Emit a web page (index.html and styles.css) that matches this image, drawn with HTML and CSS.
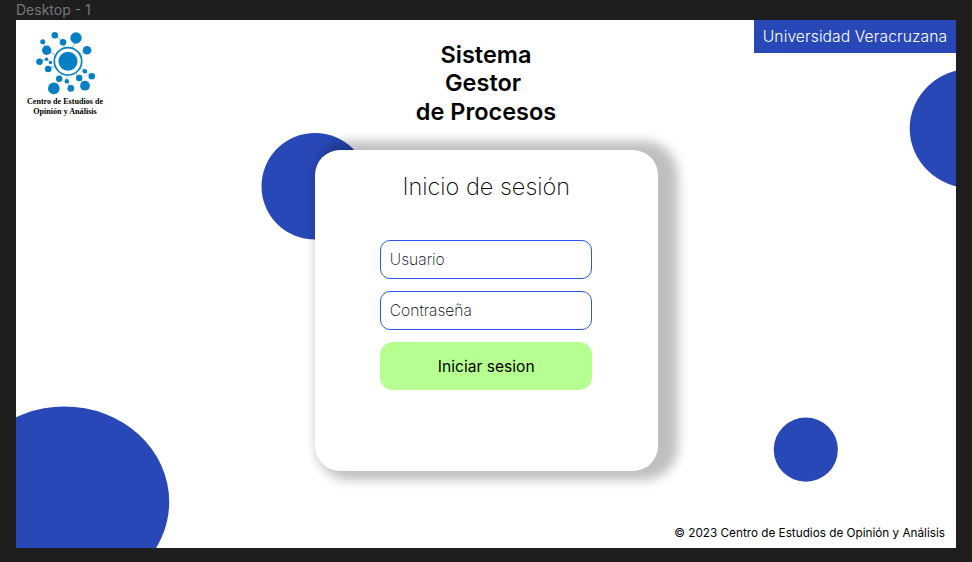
FILE: index.html
```html
<!DOCTYPE html>
<html lang="es">
<head>
<meta charset="utf-8">
<title>Sistema Gestor de Procesos</title>
<link rel="stylesheet" href="styles.css">
</head>
<body>
<div class="frame-label">Desktop - 1</div>
<main class="frame">
  <svg class="decor" viewBox="16 20 940 528" aria-hidden="true">
    <ellipse cx="315" cy="186.3" rx="53.5" ry="53.3"/>
    <ellipse cx="972.7" cy="128.5" rx="63" ry="60"/>
    <ellipse cx="64.5" cy="501.8" rx="104.7" ry="95.4"/>
    <circle cx="805.8" cy="449.6" r="32.1"/>
  </svg>
  <header class="header">
    <div class="brand">
      <svg class="brand-mark" viewBox="35 30 63 66" aria-hidden="true">
        <path class="links" d="M54.8 35.2 63 42.3 68 61M76 38 68 61M42.7 41.8 46.7 50.3 68 61 87 50.3M39.5 61.7 46.5 59.2 50.5 62.5M48.2 69 68 61M59.2 78.7 68 61 66.8 81.3 70.8 88.4M53.8 88.4 59.2 78.7M85 85.7 79.2 78 68 61 84.8 71.2 91.8 76.2"/>
        <circle cx="54.8" cy="35.2" r="3.3"/>
        <circle cx="63" cy="42.3" r="3.3"/>
        <circle cx="76" cy="38" r="5.7"/>
        <circle cx="42.7" cy="41.8" r="2.5"/>
        <circle cx="46.7" cy="50.3" r="4.7"/>
        <circle cx="87" cy="50.3" r="4.3"/>
        <circle cx="39.5" cy="61.7" r="3.3"/>
        <circle cx="46.5" cy="59.2" r="1.7"/>
        <circle cx="50.5" cy="62.5" r="1.7"/>
        <circle cx="48.2" cy="69" r="3.3"/>
        <circle cx="59.2" cy="78.7" r="3.2"/>
        <circle cx="66.8" cy="81.3" r="2.2"/>
        <circle cx="53.8" cy="88.4" r="5.8"/>
        <circle cx="70.8" cy="88.4" r="3.3"/>
        <circle cx="79.2" cy="78" r="3.2"/>
        <circle cx="85" cy="85.7" r="4.9"/>
        <circle cx="84.8" cy="71.2" r="2.3"/>
        <circle cx="91.8" cy="76.2" r="3.3"/>
        <circle class="ring" cx="68" cy="61.3" r="13.7"/>
        <circle cx="68" cy="61.3" r="9.5"/>
      </svg>
      <div class="brand-name">Centro de Estudios de<br>Opinión y Análisis</div>
    </div>
    <h1 class="title">Sistema<br>Gestor&nbsp;<br>de Procesos</h1>
    <div class="university">Universidad Veracruzana</div>
  </header>
  <form class="card">
    <h2 class="card-title">Inicio de sesión</h2>
    <input class="field" type="text" placeholder="Usuario" aria-label="Usuario">
    <input class="field" type="password" placeholder="Contraseña" aria-label="Contraseña">
    <button class="submit" type="button">Iniciar sesion</button>
  </form>
  <footer class="footer">© 2023 Centro de Estudios de Opinión y Análisis</footer>
</main>
</body>
</html>
```
FILE: styles.css
```css
* {
  box-sizing: border-box;
}

body {
  margin: 0;
  height: 562px;
  padding-left: 16px;
  overflow: hidden;
  background: #1e1e1e;
  font-family: Inter, "Liberation Sans", sans-serif;
  color: #000;
}

.frame-label {
  height: 20px;
  line-height: 20px;
  font-size: 14px;
  color: #777;
}

.frame {
  position: relative;
  display: flex;
  flex-direction: column;
  width: 940px;
  height: 528px;
  background: #fff;
  overflow: hidden;
}

.decor {
  position: absolute;
  inset: 0;
  width: 940px;
  height: 528px;
  fill: #2848b8;
}

.header {
  position: relative;
  display: grid;
  grid-template-columns: 1fr 200px 1fr;
  align-items: start;
  height: 130px;
}

.brand {
  width: 98px;
  padding-top: 10px;
  text-align: center;
}

.brand-mark {
  display: block;
  width: 63px;
  height: 66px;
  margin-left: 19px;
  fill: #067fc5;
}

.links {
  fill: none;
  stroke: #5fa9b5;
  stroke-width: 0.7;
}

.ring {
  fill: #fff;
  stroke: #067fc5;
  stroke-width: 1.7;
}

.brand-name {
  padding-top: 1px;
  font: bold 8.1px/10px "Liberation Serif", serif;
  white-space: nowrap;
}

.title {
  margin: 21px 0 0;
  font-size: 23.5px;
  line-height: 28.4px;
  font-weight: 600;
  text-align: center;
  white-space: nowrap;
}

.university {
  justify-self: end;
  width: 202px;
  height: 33px;
  background: #2848b8;
  color: #fff;
  font-size: 15.66px;
  line-height: 34px;
  font-weight: 350;
  letter-spacing: 0.08px;
  text-align: center;
  white-space: nowrap;
}

.card {
  position: relative;
  display: flex;
  flex-direction: column;
  align-items: center;
  width: 342.5px;
  height: 320.5px;
  margin: 0 0 0 299px;
  padding-top: 22px;
  background: #fff;
  border-radius: 25px;
  box-shadow: 10.5px 0 11px 9px rgba(0, 0, 0, 0.25);
}

.card-title {
  margin: 0 0 39px;
  font-size: 23.5px;
  line-height: 29px;
  font-weight: 200;
}

.field {
  width: 212px;
  height: 38.5px;
  margin: 0 0 12.5px;
  padding: 0 8.5px;
  border: 1px solid #2c56f0;
  border-radius: 10px;
  background: #fff;
  font: 200 15.66px Inter, sans-serif;
}

.field::placeholder {
  color: #000;
  opacity: 1;
}

.submit {
  width: 212px;
  height: 48px;
  border: 0;
  border-radius: 13px;
  background: #b6ff91;
  font: 400 15.6px Inter, sans-serif;
  color: #000;
}

.footer {
  position: relative;
  margin: auto 11px 7px 0;
  font-size: 11.74px;
  line-height: 16px;
  text-align: right;
}
```
